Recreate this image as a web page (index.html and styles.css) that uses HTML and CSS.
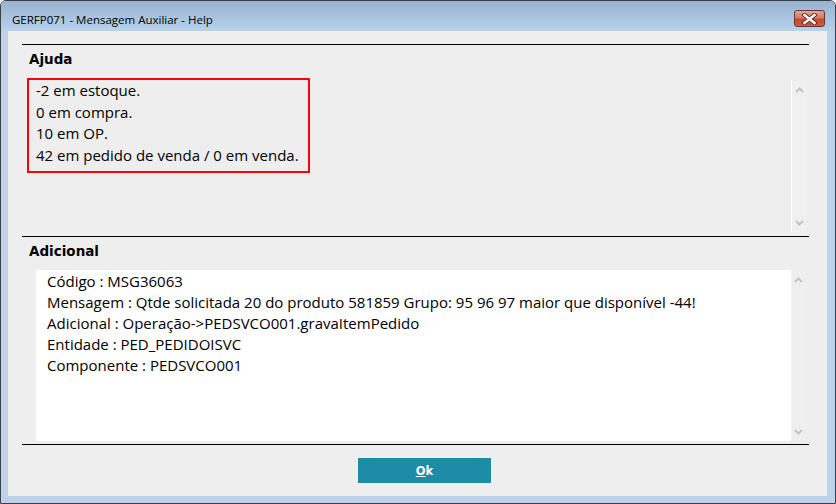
FILE: index.html
```html
<!DOCTYPE html>
<html lang="pt-BR">
<head>
    <meta charset="UTF-8">
    <title>GERFP071 - Mensagem Auxiliar - Help</title>
    <link rel="stylesheet" href="styles.css">
</head>
<body>
    <div class="window">
        <div class="titlebar">
            <span class="title">GERFP071 - Mensagem Auxiliar - Help</span>
            <button class="close-btn" aria-label="Fechar">
                <svg width="17" height="12" viewBox="0 0 17 12">
                    <path d="M3.5 2 L13.5 10 M13.5 2 L3.5 10" stroke="#5a2a22" stroke-width="4.4" stroke-linecap="square"/>
                    <path d="M3.5 2 L13.5 10 M13.5 2 L3.5 10" stroke="#f4f4f4" stroke-width="2.6" stroke-linecap="square"/>
                </svg>
            </button>
        </div>

        <div class="client">
            <div class="section">
                <div class="section-title">Ajuda</div>
                <div class="section-body help-body">
                    <div class="help-content">
                        <div class="help-box">
                            <div>-2 em estoque.</div>
                            <div>0 em compra.</div>
                            <div>10 em OP.</div>
                            <div>42 em pedido de venda / 0 em venda.</div>
                        </div>
                    </div>
                    <div class="scrollbar help-scroll">
                        <svg width="9" height="6" viewBox="0 0 9 6"><polyline points="1,5 4.5,1.5 8,5" fill="none" stroke="#c4c4c4" stroke-width="2"/></svg>
                        <svg width="9" height="6" viewBox="0 0 9 6"><polyline points="1,1 4.5,4.5 8,1" fill="none" stroke="#c4c4c4" stroke-width="2"/></svg>
                    </div>
                </div>
            </div>

            <div class="section">
                <div class="section-title">Adicional</div>
                <div class="section-body extra-body">
                    <div class="extra-box">
                        <div>Código : MSG36063</div>
                        <div>Mensagem : Qtde solicitada 20 do produto 581859 Grupo: 95 96 97 maior que disponível -44!</div>
                        <div>Adicional : Operação-&gt;PEDSVCO001.gravaItemPedido</div>
                        <div>Entidade : PED_PEDIDOISVC</div>
                        <div>Componente : PEDSVCO001</div>
                    </div>
                    <div class="scrollbar extra-scroll">
                        <svg width="9" height="6" viewBox="0 0 9 6"><polyline points="1,5 4.5,1.5 8,5" fill="none" stroke="#c4c4c4" stroke-width="2"/></svg>
                        <svg width="9" height="6" viewBox="0 0 9 6"><polyline points="1,1 4.5,4.5 8,1" fill="none" stroke="#c4c4c4" stroke-width="2"/></svg>
                    </div>
                </div>
            </div>

            <div class="footer">
                <button class="ok-btn"><u>O</u>k</button>
            </div>
        </div>
    </div>
</body>
</html>
```

FILE: styles.css
```css
* {
    margin: 0;
    padding: 0;
    box-sizing: border-box;
}

body {
    width: 836px;
    height: 504px;
    background-color: #ffffff;
    font-family: 'Open Sans', 'Noto Sans', sans-serif;
    color: #000000;
}

.window {
    width: 836px;
    height: 504px;
    border: 1px solid #3f3f3f;
    border-radius: 6px 6px 0 0;
    background-color: #bcd3ea;
    display: flex;
    flex-direction: column;
    padding: 0 8px 7px 7px;
}

.titlebar {
    height: 30px;
    margin: 0 -8px 0 -7px;
    padding: 9px 10px 0 11px;
    background: linear-gradient(to bottom, #97b3d2, #bad2ea);
    border-radius: 5px 5px 0 0;
    display: flex;
    justify-content: space-between;
    align-items: flex-start;
}

.title {
    font-size: 11.5px;
    line-height: 16px;
    margin-top: 2px;
}

.close-btn {
    width: 31px;
    height: 17px;
    border: 1px solid #6e3530;
    border-radius: 3px;
    background: linear-gradient(to bottom, #e7a595 0%, #d77a66 45%, #c24a30 55%, #cd5d44 100%);
    display: flex;
    align-items: center;
    justify-content: center;
}

.client {
    flex: 1;
    background-color: #eeeeee;
    padding: 13px 18px 0 14px;
    display: flex;
    flex-direction: column;
}

.section {
    border-top: 1px solid #000000;
}

.section-title {
    font-family: 'DejaVu Sans', sans-serif;
    font-weight: bold;
    font-size: 13.5px;
    height: 33px;
    line-height: 29px;
    padding-left: 7px;
}

.section-body {
    display: flex;
    font-size: 15px;
}

.help-body {
    height: 158px;
}

.help-content {
    flex: 1;
}

.help-box {
    margin-left: 5px;
    width: 283px;
    height: 95px;
    border: 2px solid #ff0000;
    padding: 0 0 0 7px;
    line-height: 21.5px;
}

.scrollbar {
    width: 16px;
    display: flex;
    flex-direction: column;
    justify-content: space-between;
    align-items: center;
    padding: 7px 0 6px;
}

.help-scroll {
    margin-top: 2px;
    margin-right: 2px;
    height: 152px;
    background-color: #f0f0f0;
    border-left: 1px solid #ffffff;
}

.extra-body {
    height: 174px;
    padding-left: 14px;
}

.extra-box {
    flex: 1;
    height: 171px;
    background-color: #ffffff;
    padding: 1px 0 0 11px;
    line-height: 21px;
}

.extra-scroll {
    margin-right: 3px;
    width: 15px;
    height: 171px;
    background-color: #efefef;
}

.footer {
    border-top: 1px solid #000000;
    display: flex;
    justify-content: center;
    padding: 13px 0 0 18px;
}

.ok-btn {
    width: 133px;
    height: 25px;
    border: none;
    background-color: #1e8ba8;
    color: #ffffff;
    font-family: 'DejaVu Sans', sans-serif;
    font-weight: bold;
    font-size: 11.5px;
}
```
